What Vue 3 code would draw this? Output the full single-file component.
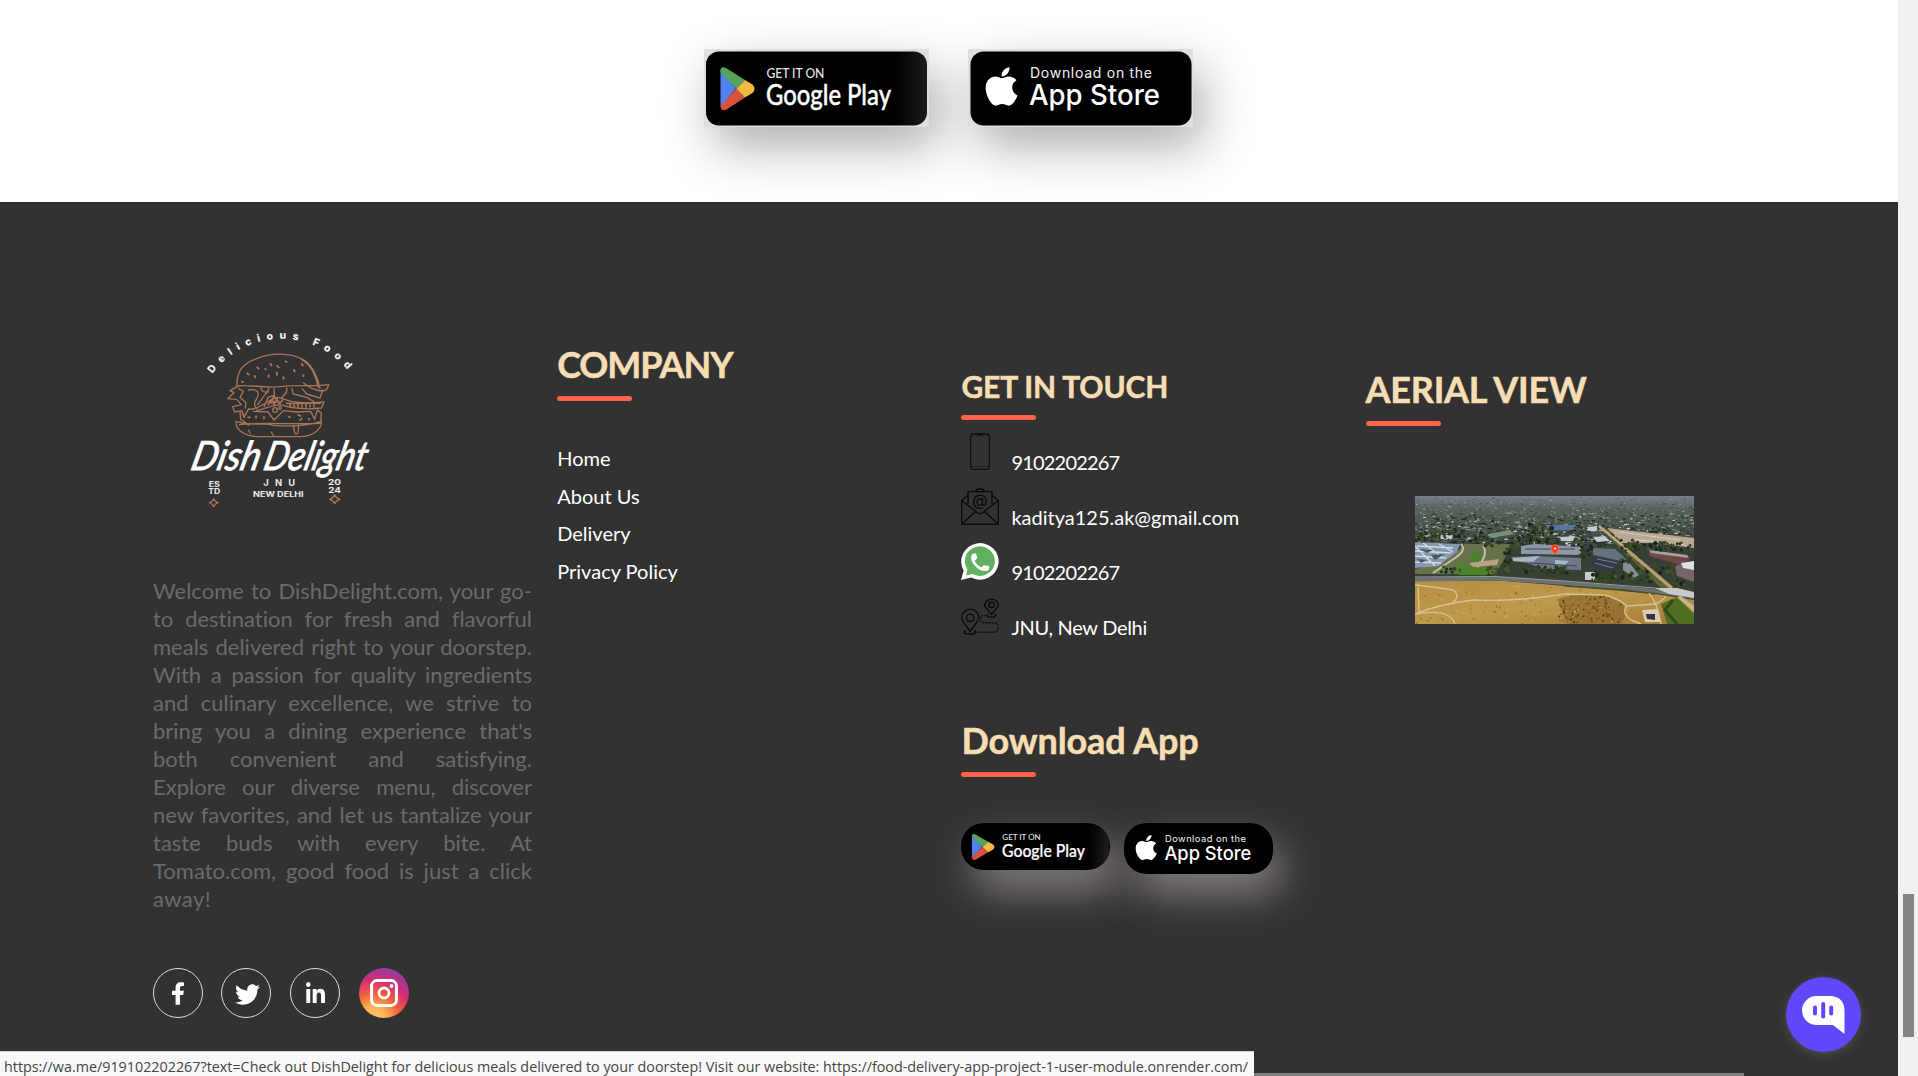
<script setup>
const paragraph = [
  'Welcome to DishDelight.com, your go-',
  'to destination for fresh and flavorful',
  'meals delivered right to your doorstep.',
  'With a passion for quality ingredients',
  'and culinary excellence, we strive to',
  "bring you a dining experience that's",
  'both convenient and satisfying.',
  'Explore our diverse menu, discover',
  'new favorites, and let us tantalize your',
  'taste buds with every bite. At',
  'Tomato.com, good food is just a click',
  'away!',
]
const links = ['Home', 'About Us', 'Delivery', 'Privacy Policy']

// Store badge artwork, shared by the large and the small buttons
const playArt = `
  <defs><linearGradient id="sheen" x1="0" x2="1"><stop offset=".86" stop-color="#000"/><stop offset="1" stop-color="#1c1c1c"/></linearGradient></defs>
  <rect x="2" y="2.5" width="221" height="74" rx="13" fill="url(#sheen)"/>
  <path d="M16.5 20V58L32 39.5Z" fill="#4f82ed"/>
  <path d="M16.5 22Q16.5 16.5 22 19L41 31L32.5 39.8L16.5 23Z" fill="#57a55a"/>
  <path d="M16.5 57Q17 63 22.5 60.5L41 48.5L32.5 39.5L17 56Z" fill="#d9503f"/>
  <path d="M41 31L48.5 35.5Q52.5 39.8 48.5 44L41 48.5L32.5 39.7Z" fill="#f0bb41"/>
  <text x="62.4" y="28.7" textLength="58" lengthAdjust="spacingAndGlyphs" font-size="14" font-family="Lato, sans-serif" font-weight="500" fill="#e8e8e8">GET IT ON</text>
  <text x="62" y="56.3" textLength="125" lengthAdjust="spacingAndGlyphs" font-size="28" font-family="Lato, sans-serif" font-weight="500" stroke="#fff" stroke-width=".4" fill="#fff">Google Play</text>`
const appleArt = `
  <rect x="2.5" y="2.5" width="221" height="74" rx="13" fill="#000"/>
  <path transform="translate(17.3 15.6) scale(.0845 .0855)" fill="#fff" d="M318.7 268.7c-.2-36.7 16.4-64.4 50-84.8-18.8-26.9-47.2-41.7-84.7-44.6-35.5-2.8-74.3 20.7-88.5 20.7-15 0-49.4-19.7-76.4-19.7C63.3 141.2 4 184.8 4 273.5q0 39.3 14.4 81.2c12.8 36.7 59 126.7 107.2 125.2 25.2-.6 43-17.9 75.8-17.9 31.8 0 48.3 17.9 76.4 17.9 48.6-.7 90.4-82.5 102.6-119.3-65.2-30.7-61.7-90-61.7-91.9zm-56.6-164.2c27.3-32.4 24.8-61.9 24-72.5-24.1 1.4-52 16.4-67.9 34.9-17.5 19.8-27.8 44.3-25.6 71.9 26.1 2 49.9-11.4 69.5-34.3z"/>
  <text x="62" y="28.7" textLength="122" lengthAdjust="spacing" font-size="14" font-family="Inter, sans-serif" font-weight="400" fill="#f4f4f4">Download on the</text>
  <text x="61" y="56.3" textLength="131" lengthAdjust="spacingAndGlyphs" font-size="29" font-family="Inter, sans-serif" font-weight="500" fill="#fff">App Store</text>`

// Deterministic scatter used to texture the aerial picture
let seed = 11
const rnd = () => {
  seed = (seed * 16807) % 2147483647
  return seed / 2147483647
}
const pick = (list) => list[Math.floor(rnd() * list.length)]

const city = []
for (let i = 0; i < 1900; i++) {
  const depth = Math.pow(rnd(), 0.9)
  const y = 1 + depth * 49
  const k = 0.4 + depth * 0.7
  const far = ['#6f7a78', '#4b5750', '#9aa19e', '#333f38', '#59655c', '#b5b2aa', '#46524a']
  const near = ['#1c291d', '#232f1e', '#2f3b2c', '#182220', '#3c4a38', '#ccd1d5', '#8d9498', '#1a271f', '#48543c', '#a39f94']
  city.push({ x: rnd() * 279, y, w: (0.8 + rnd() * 4) * k, h: (0.5 + rnd() * 1.4) * k, c: pick(depth < 0.35 ? far : near) })
}
const trees = []
const groves = [
  [88, 52, 8, 26, 26], [26, 70, 20, 7, 12], [72, 70, 12, 10, 14], [108, 70, 45, 8, 44], [176, 76, 45, 9, 46],
  [112, 28, 26, 18, 60], [165, 50, 12, 12, 14], [205, 44, 20, 24, 34], [212, 46, 66, 8, 44], [222, 70, 16, 16, 20],
  [240, 68, 20, 10, 20], [258, 84, 12, 8, 12], [60, 42, 60, 8, 34], [0, 34, 70, 11, 56],
]
for (const [x, y, w, h, n] of groves)
  for (let i = 0; i < n; i++)
    trees.push({ x: x + rnd() * w, y: y + rnd() * h, r: 0.7 + rnd() * 1.5, c: pick(['#1c2a1b', '#26351f', '#31411f', '#3d4a24', '#182320', '#4a5530']) })
const scrub = []
for (let i = 0; i < 170; i++) scrub.push({ x: 144 + rnd() * 64, y: 100 + rnd() * 27, r: 0.3 + rnd() * 0.8, c: pick(['#5c4415', '#6d4f17', '#4a3a14', '#a17a35']) })
for (let i = 0; i < 260; i++) scrub.push({ x: rnd() * 240, y: 90 + rnd() * 38, r: 0.3 + rnd() * 0.8, c: pick(['#a98238', '#cfa95c', '#b08a3f', '#8f6d2a']) })
</script>

<template>
  <div class="screen">
    <main class="page">
      <section class="stores">
        <svg class="badge" viewBox="0 0 225 78" preserveAspectRatio="none" v-html="playArt"></svg>
        <svg class="badge" viewBox="0 0 225 78" preserveAspectRatio="none" v-html="appleArt"></svg>
      </section>

      <footer class="footer">
        <div class="col about">
          <svg class="logo" viewBox="39 30 660 600" width="220" height="200">
            <path id="arc" d="M217 191A257 257 0 0 1 628 187" fill="none" />
            <text font-family="Inter, sans-serif" font-weight="800" font-size="31" fill="#f4f4f4">
              <textPath href="#arc" textLength="466" lengthAdjust="spacing">Delicious Food</textPath>
            </text>
            <g fill="none" stroke="#a8745a" stroke-width="4" stroke-linecap="round" stroke-linejoin="round">
              <path d="M291 230C288 188 305 160 350 146C390 128 450 126 492 150C520 168 532 200 540 236M484 148C512 164 528 196 534 232" />
              <path d="M291 228C330 222 370 236 420 230C470 224 520 230 566 224C562 244 548 246 530 240C512 236 500 226 490 218" />
              <path d="M291 230L270 242L282 248L263 266L290 268L304 284L278 290L284 306L306 302L312 322L326 296M296 236L310 244L300 262L318 278L316 294" />
              <path d="M326 240C350 236 362 246 350 266S346 290 350 296M362 234C370 250 384 250 386 236M352 284C366 270 372 252 384 246M372 290L384 262L402 256L394 280M402 236L404 264M440 234C446 250 430 254 424 264M456 236L460 252L500 262L524 276M486 236L500 252L540 264L548 240" />
              <path d="M326 298C360 300 380 270 412 262C436 264 448 286 552 276L544 294C500 300 450 294 430 286S380 296 350 302" />
              <path d="M384 284L396 268L402 284L410 266L418 282L428 270M390 276L424 276M450 284L452 290M462 286L464 292M474 284V292M486 286V292M498 284V292M510 286V290M522 282V290M440 280C470 282 500 278 540 280" stroke-width="5" />
              <path d="M300 304L302 330M312 322L308 310M340 304L384 306L402 330L430 302L470 306L512 304L524 328L532 300L544 310L542 336" />
              <circle cx="405" cy="300" r="7" /><circle cx="420" cy="294" r="4" />
              <path d="M288 334C330 350 360 334 400 346C450 350 510 346 544 334C546 356 520 380 480 380H354C316 378 286 362 288 334ZM298 344C350 336 450 344 540 340M306 330L326 346M330 342H360" />
              <path d="M460 348L464 368C466 374 474 372 474 366L476 346M326 360L330 370M394 366L400 376" />
              <path d="M322 190L326 194M352 172L356 176M344 198L346 202M376 177L377 178M392 162L394 166M386 196V200M410 188L411 194M412 168L416 172M437 154L440 156M462 180L464 184M486 162L488 166M490 196V198M430 202L431 206M306 215L309 216" stroke-width="6" />
              <path d="M324 322H330M348 318V324M372 320V326M446 320L450 322M474 314L482 318M480 330L486 326M506 326L508 330" stroke-width="5" />
              <path d="M221 566Q224 576 235 578Q224 581 221 590Q218 581 208 578Q218 576 221 566ZM584 554Q588 565 600 568Q588 571 584 581Q580 571 569 568Q580 565 584 554Z" />
            </g>
            <g font-family="Lato, sans-serif" fill="#fff" font-style="italic" font-weight="400" stroke="#fff" stroke-width="2.500">
              <text transform="translate(148 479) skewX(-14)" font-size="121" textLength="206" lengthAdjust="spacingAndGlyphs">Dish</text>
              <text transform="translate(366 479) skewX(-14)" font-size="121" textLength="308" lengthAdjust="spacingAndGlyphs">Delight</text>
            </g>
            <g font-family="Inter, sans-serif" font-weight="700" fill="#e9e9e9">
              <text x="206" y="530" font-size="21" textLength="34" lengthAdjust="spacingAndGlyphs">ES</text>
              <text x="205" y="553" font-size="21" textLength="36" lengthAdjust="spacingAndGlyphs">TD</text>
              <text x="370" y="527" font-size="28" textLength="95">JNU</text>
              <text x="339" y="560" font-size="21" textLength="152" lengthAdjust="spacingAndGlyphs">NEW DELHI</text>
              <text x="564" y="526" font-size="23" textLength="39" lengthAdjust="spacingAndGlyphs">20</text>
              <text x="565" y="549" font-size="23" textLength="38" lengthAdjust="spacingAndGlyphs">24</text>
            </g>
          </svg>
          <p class="blurb"><span v-for="line in paragraph" :key="line">{{ line }}</span></p>
          <div class="social">
            <i class="ring"><svg width="14" height="23" viewBox="0 0 320 512"><path d="M279.14 288l14.22-92.66h-88.91v-60.13c0-25.35 12.42-50.06 52.24-50.06h40.42V6.26S260.43 0 225.36 0c-73.22 0-121.08 44.38-121.08 124.72v70.62H22.89V288h81.39v224h100.17V288z" /></svg></i>
            <i class="ring tw"><svg width="25" height="25" viewBox="0 0 512 512"><path d="M459.37 151.716c.325 4.548.325 9.097.325 13.645 0 138.72-105.583 298.558-298.558 298.558-59.452 0-114.68-17.219-161.137-47.106 8.447.974 16.568 1.299 25.34 1.299 49.055 0 94.213-16.568 130.274-44.832-46.132-.975-84.792-31.188-98.112-72.772 6.498.974 12.995 1.624 19.818 1.624 9.421 0 18.843-1.3 27.614-3.573-48.081-9.747-84.143-51.98-84.143-102.985v-1.299c13.969 7.797 30.214 12.67 47.431 13.319-28.264-18.843-46.781-51.005-46.781-87.391 0-19.492 5.197-37.36 14.294-52.954 51.655 63.675 129.3 105.258 216.365 109.807-1.624-7.797-2.599-15.918-2.599-24.04 0-57.828 46.782-104.934 104.934-104.934 30.213 0 57.502 12.67 76.67 33.137 23.715-4.548 46.456-13.32 66.599-25.34-7.798 24.366-24.366 44.833-46.132 57.827 21.117-2.273 41.584-8.122 60.426-16.243-14.292 20.791-32.161 39.308-52.628 54.253z" /></svg></i>
            <i class="ring li"><svg width="19" height="21" viewBox="0 0 448 448" preserveAspectRatio="none"><path d="M100.28 448H7.4V148.9h92.88zM53.79 108.1C24.09 108.1 0 83.5 0 53.8a53.79 53.79 0 0 1 107.58 0c0 29.7-24.1 54.3-53.79 54.3zM447.9 448h-92.68V302.4c0-34.7-.7-79.2-48.29-79.2-48.29 0-55.69 37.7-55.69 76.7V448h-92.78V148.9h89.08v40.8h1.3c12.4-23.5 42.69-48.3 87.88-48.3 94 0 111.28 61.9 111.28 142.3V448z" /></svg></i>
            <i class="insta">
              <svg width="28" height="28" viewBox="0 0 28 28"><rect x="1.6" y="1.6" width="24.8" height="24.8" rx="5.500" fill="none" stroke="#fff" stroke-width="3" /><circle cx="14" cy="14" r="5" fill="none" stroke="#fff" stroke-width="2.8" /><circle cx="21.500" cy="7" r="1.900" fill="#fff" /></svg>
            </i>
          </div>
        </div>

        <div class="col company">
          <h2 class="tight">COMPANY</h2>
          <hr class="mark" />
          <ul><li v-for="l in links" :key="l">{{ l }}</li></ul>
        </div>

        <div class="col touch">
          <h3>GET IN TOUCH</h3>
          <hr class="mark" />
          <div class="contacts">
            <div class="contact">
              <svg width="38" height="37" viewBox="0 0 38 37"><g fill="none" stroke="#0e0e0e" stroke-width="1.300"><rect x="9.600" y=".6" width="18.800" height="35.800" rx="2.600" /><path d="M10.500 33.500H27.500M10.500 2.500H27.500" stroke-width=".6" opacity=".7" /><path d="M16 1.600H22" stroke-width="1.600" /></g></svg>
              <span class="num">9102202267</span>
            </div>
            <div class="contact">
              <svg width="38" height="37" viewBox="0 0 38 37"><g fill="none" stroke="#0a0a0a" stroke-width="1.450" stroke-linejoin="round"><path d="M7 16V3.600H31V16M14 3.200Q19 -1.800 24 3.200M6.500 7.500L.7 12.500V36.300H37.300V12.500L31.500 7.500M.7 12.500L16 24.500Q19 27 22 24.500L37.300 12.500M1 36L14.500 23.500M37 36L23.500 23.500" /></g><text x="11" y="18.300" font-family="Inter, sans-serif" font-size="16" font-weight="500" fill="#0a0a0a">@</text></svg>
              <span class="mail">kaditya125.ak@gmail.com</span>
            </div>
            <div class="contact">
              <svg width="38" height="37" viewBox="0 0 38 37"><path d="M0 37L2.700 27.500A18.700 18.300 0 1 1 10 34.500Z" fill="#fff" /><path d="M5 32.500L6.500 26.500A15 14.800 0 1 1 11.500 31Z" fill="#60b05f" /><path transform="translate(7.100 7.200)" fill="#fff" d="M6.620 10.790c1.440 2.830 3.760 5.140 6.590 6.590l2.200-2.200c.27-.27.67-.36 1.020-.24 1.120.37 2.330.57 3.570.57.55 0 1 .45 1 1V18.500c0 1.500-2 2.300-4 2.300-7.500 0-14-8-14-13.500 0-2 1-4 2.500-4.100h1.500c.7 0 1 .45 1.200 1 .3 1 .6 2 1 3 .11.35.03.74-.25 1.020z" /></svg>
              <span class="num">9102202267</span>
            </div>
            <div class="contact">
              <svg width="38" height="37" viewBox="0 0 38 37"><g fill="none" stroke="#0a0a0a" stroke-width="1.400"><path d="M9 33.500C6 28 .7 24 .7 19.500a8.600 8.300 0 0 1 17.200 0C17.900 24 12 28 9 33.500Z" /><circle cx="9.200" cy="19.800" r="3.700" /><path d="M5 32.300Q2.500 33.500 3.500 35Q9 37.500 14.500 35Q15.500 33.300 13 32.300" /><path d="M30.500 16.500C28 12 23.700 10 23.700 6.900a6.900 6.500 0 0 1 13.700 0C37.400 10 33 12 30.500 16.500Z" /><circle cx="30.600" cy="7" r="2.700" /><path d="M27.500 16Q25 17.500 27.500 18.800Q31 19.800 34 18.600Q36 17.200 33.500 16" /><path d="M25 17.500H22Q19.500 18 19.500 21Q19.500 24.700 23 24.700H33Q37.300 25 37.300 29.300Q37.300 34.200 33 34.200H16" stroke-dasharray="1.800 1.200" /></g></svg>
              <span class="place">JNU, New Delhi</span>
            </div>
          </div>
          <h2 class="dl">Download App</h2>
          <hr class="mark" />
          <div class="mini">
            <span class="pill play"><svg viewBox="0 0 225 78" preserveAspectRatio="none" v-html="playArt"></svg></span>
            <span class="pill apple"><svg viewBox="0 0 225 78" preserveAspectRatio="none" v-html="appleArt"></svg></span>
          </div>
        </div>

        <div class="col aerial">
          <h2 class="av">AERIAL VIEW</h2>
          <hr class="mark" />
          <svg class="photo" width="279" height="128" viewBox="0 0 279 128">
            <defs>
              <linearGradient id="town" x1="0" y1="0" x2="0" y2="1"><stop offset="0" stop-color="#777f8c" /><stop offset=".1" stop-color="#59635d" /><stop offset=".45" stop-color="#354034" /><stop offset="1" stop-color="#3b4432" /></linearGradient>
              <linearGradient id="field" x1="0" y1="0" x2="1" y2="1"><stop offset="0" stop-color="#b58f42" /><stop offset=".5" stop-color="#bd994c" /><stop offset="1" stop-color="#a47c36" /></linearGradient>
            </defs>
            <rect width="279" height="128" fill="url(#town)" />
            <rect v-for="(b, i) in city" :key="'c' + i" :x="b.x" :y="b.y" :width="b.w" :height="b.h" :fill="b.c" />
            <path d="M192 32L279 42V52L240 47L208 47Z" fill="#b9a893" /><path d="M205 36L265 44M215 43L270 49" stroke="#d8ccbb" />
            <path d="M126 29H160L158 34H124Z" fill="#5877a0" /><path d="M72 38L95 34L98 38L78 42Z" fill="#78917f" /><path d="M26 39H38L37 43H25Z" fill="#bccdd3" /><path d="M178 41L190 40L195 45L182 46ZM145 41L160 40L158 45H146ZM172 31L182 30V35H174Z" fill="#c3ccd5" />
            <path d="M0 73L30 66L50 48H95L90 62L80 78H0Z" fill="#66724b" />
            <path d="M0 46L45 48L42 56L24 70L0 72Z" fill="#8799ac" />
            <path d="M2 50L38 52M0 55L36 57M0 60L31 62M0 66L26 67M8 47L28 62M24 48L38 56M0 50L20 70" stroke="#d1dce4" stroke-width="1.400" /><path d="M4 53L18 54L12 57ZM16 59L30 58L20 64ZM2 63L12 64L6 67Z" fill="#485869" />
            <path d="M46 48Q52 54 40 62T18 77M68 50Q74 58 62 72" stroke="#c9bea3" stroke-width="2" fill="none" />
            <path d="M56 60L66 54L64 66L56 66ZM36 73L48 66L52 68L42 75ZM42 77L50 72L70 71L78 75L76 79H44Z" fill="#4a8428" /><path d="M54 67L84 63L82 69L58 71Z" fill="#b9a284" />
            <path d="M106 50L120 48L166 51V59L106 58Z" fill="#8d97a5" /><path d="M96 61L122 60L166 62V74L128 73L112 67L98 65Z" fill="#6e7887" /><path d="M98 62L125 60L118 66L98 65ZM140 64L154 65L150 69H140Z" fill="#a8b7c8" /><path d="M110 53H160M115 67L162 70" stroke="#3c4650" />
            <path d="M175 66L180 60L204 66L204 73L194 76L176 70Z" fill="#343b48" /><path d="M182 63L202 67M180 67L198 72" stroke="#75808f" /><path d="M178 52L200 53L212 63L206 65L178 59Z" fill="#65717d" /><path d="M208 67L214 66L224 79L219 82L208 74Z" fill="#858d96" /><path d="M170 76H180V84H170Z" fill="#c8cbd0" />
            <path d="M234 54L272 59L275 64L265 69L234 60Z" fill="#6e4846" /><path d="M234 54L272 59L274 62L236 57Z" fill="#a9a0a2" /><path d="M260 70L279 65V86L262 80Z" fill="#766668" /><path d="M266 67L279 65V74L268 72Z" fill="#dbe0e4" />
            <path d="M184 30L208 50L258 92L246 92L206 54Z" fill="#5a6238" /><path d="M184 30L208 50L256 92" stroke="#c3a877" stroke-width="2.500" fill="none" />
            <circle v-for="(t, i) in trees" :key="'t' + i" :cx="t.x" :cy="t.y" :r="t.r" :fill="t.c" />
            <path d="M212 54L257 92" stroke="#b99d6c" stroke-width="3" />
            <path d="M0 84L90 85L150 90L240 98L279 104V128H0Z" fill="url(#field)" />
            <path d="M142 103Q170 95 200 102Q218 112 206 128H152Z" fill="#8c662a" opacity=".7" />
            <circle v-for="(t, i) in scrub" :key="'s' + i" :cx="t.x" :cy="t.y" :r="t.r" :fill="t.c" />
            <path d="M0 83.500L80 82.500L150 87L240 95L279 101" stroke="#6b7072" stroke-width="4" fill="none" /><path d="M0 81L80 80.500L150 85L240 92L279 97" stroke="#98999a" stroke-width="1" fill="none" /><path d="M150 90L210 94L240 98" stroke="#4b5227" stroke-width="1.500" fill="none" />
            <path d="M240 92L262 92L279 96V102L254 98Z" fill="#c8cac9" />
            <path d="M246 108L262 101L279 118V128H252Z" fill="#4d6e23" /><path d="M258 104L250 114L262 128" stroke="#2f461b" stroke-width="3" fill="none" /><path d="M262 101L279 116V110L266 100Z" fill="#c7b587" />
            <path d="M0 89Q20 91 38 94Q46 100 38 106M0 118Q25 108 58 104Q100 106 150 98L190 99Q206 104 212 110Q206 116 216 124L226 128M0 118Q35 112 40 128M212 110L240 108Q252 102 250 100M234 97Q243 108 246 128M3 88L4 116" stroke="#d6c195" stroke-width="1.400" fill="none" />
            <path d="M227 114L242 113L246 126H230Z" fill="#d9cdb6" /><path d="M231 118L240 118V124L232 123Z" fill="#34313a" />
            <path d="M136 52.500a4 4 0 1 1 8 0Q144 55 140 58Q136 55 136 52.500Z" fill="#fa3c0c" stroke="#ffb09b" stroke-width=".4" /><circle cx="140" cy="52.500" r="1.100" fill="#fff" />
          </svg>
        </div>
        <hr class="rule" />
      </footer>

      <button class="chat">
        <svg width="43" height="38" viewBox="0 0 43 38"><path d="M14.500 0H28.500Q42.500 1 42.500 15V38L31 29H14.500A14.500 14.500 0 0 1 14.500 0Z" fill="#fff" /><g stroke="#5f48fa" stroke-width="4" stroke-linecap="round"><path d="M13 11.500V17.500M21.200 8V20.500M29.200 11.500V17.500" /></g></svg>
      </button>
      <div class="status"><svg width="1250" height="24"><text x="4" y="19.500" textLength="1244" lengthAdjust="spacingAndGlyphs" font-size="15">https://wa.me/919102202267?text=Check out DishDelight for delicious meals delivered to your doorstep! Visit our website: https://food-delivery-app-project-1-user-module.onrender.com/</text></svg></div>
    </main>
    <aside class="scrollbar"><div class="thumb"></div></aside>
  </div>
</template>

<style>
body { margin: 0; overflow: hidden; }
</style>

<style scoped>
.screen { display: flex; width: 1918px; height: 1076px; overflow: hidden; font-family: Lato, "Open Sans", sans-serif; background: #fff; }
.page { position: relative; display: flex; flex-direction: column; width: 1898px; height: 1076px; overflow: hidden; }
.stores { display: flex; gap: 39px; height: 153px; padding: 49px 0 0 704px; }
.badge { display: block; width: 225px; height: 78px; background: #dfdfdf; box-shadow: 10px 20px 50px rgba(0, 0, 0, .32); }
.footer { position: relative; display: grid; grid-template-columns: 379px 379px 379px 379px; column-gap: 25.2px; align-items: start; height: 874px; padding-left: 153px; background: #323232; color: #fff; box-sizing: border-box; }
.col { display: flex; flex-direction: column; align-items: flex-start; }
.about { padding-top: 118px; }
.logo { display: block; overflow: visible; }
.blurb { width: 379px; margin: 57px 0 0; color: #6b6b6b; font-size: 22px; font-weight: 400; line-height: 28px; font-variant-ligatures: none; }
.blurb span { display: block; text-align: justify; text-align-last: justify; white-space: nowrap; }
.blurb span:last-child { text-align-last: left; letter-spacing: .4px; }
.social { display: flex; gap: 19px; margin-top: 55px; }
.ring { display: flex; align-items: center; justify-content: center; width: 50px; height: 50px; border: 1.5px solid #dedede; border-radius: 50%; box-sizing: border-box; }
.ring svg { fill: #fff; }
.tw svg { margin: 2px 0 0 3px; }
.tw { margin-left: -1px; }
.li svg { margin-top: -2px; }
.insta { display: flex; align-items: center; justify-content: center; width: 50px; height: 50px; border-radius: 50%; background: radial-gradient(circle at 28% 105%, #fdd073 0, #fbb253 22%, #f2623b 42%, #d6306f 62%, #a33796 80%, #5e62bd 100%); }
h2, h3 { margin: 0; color: #f5deb3; font-weight: 700; white-space: nowrap; -webkit-text-stroke: .5px #f5deb3; }
h2 { font-size: 36px; line-height: 46px; }
h3 { font-size: 30px; line-height: 38px; letter-spacing: -.14px; }
.tight { letter-spacing: -1.1px; }
.dl { letter-spacing: -.1px; }
.av { letter-spacing: -.25px; }
.mark { width: 75px; height: 5px; margin: 9px 0 0; border: 0; border-radius: 3px; background: tomato; }
.company { padding-top: 139px; }
.company ul { display: flex; flex-direction: column; gap: 12.5px; margin: 45px 0 0; padding: 0; list-style: none; font-size: 20px; line-height: 25px; }
.touch { padding-top: 165px; }
.touch h3 + .mark { margin-top: 10px; }
.contacts { display: flex; flex-direction: column; gap: 18px; margin-top: 13px; font-size: 20px; line-height: 25px; }
.contact { display: flex; align-items: flex-end; gap: 12px; height: 37px; }
.contact span { margin-bottom: -5px; }
.num { letter-spacing: -.8px; }
.place { letter-spacing: -.3px; }
.touch .dl { margin-top: 82px; }
.mini { display: flex; align-items: flex-start; gap: 14px; margin-top: 46px; }
.pill { display: block; width: 149px; border-radius: 23px; background: #000; overflow: hidden; box-shadow: 10px 20px 40px rgba(192, 176, 176, .6); }
.pill svg { display: block; width: 100%; height: 100%; }
.play { height: 47px; }
.apple { height: 51px; }
.aerial { padding-top: 164px; }
.photo { display: block; margin: 70px 0 0 49.5px; }
.rule { position: absolute; left: 153px; bottom: 0; width: 1591px; height: 3px; margin: 0; border: 0; background: #808080; }
.chat { position: absolute; left: 1786px; top: 977px; width: 75px; height: 75px; padding: 0; border: 0; border-radius: 50%; background: #5f48fa; box-shadow: 0 3px 10px rgba(130, 130, 130, .35); }
.chat svg { display: block; margin: 0 0 0 16px; }
.status { position: absolute; left: 0; bottom: 0; width: 1254px; height: 25px; border-top: 1px solid #d6d6d6; background: #f9f9f9; box-sizing: border-box; }
.status svg { display: block; font-family: "Open Sans", sans-serif; fill: #444; }
.scrollbar { width: 20px; height: 1076px; background: #f0f0f0; }
.thumb { width: 11px; height: 143px; margin: 894px 0 0 5px; background: #858585; }
</style>
